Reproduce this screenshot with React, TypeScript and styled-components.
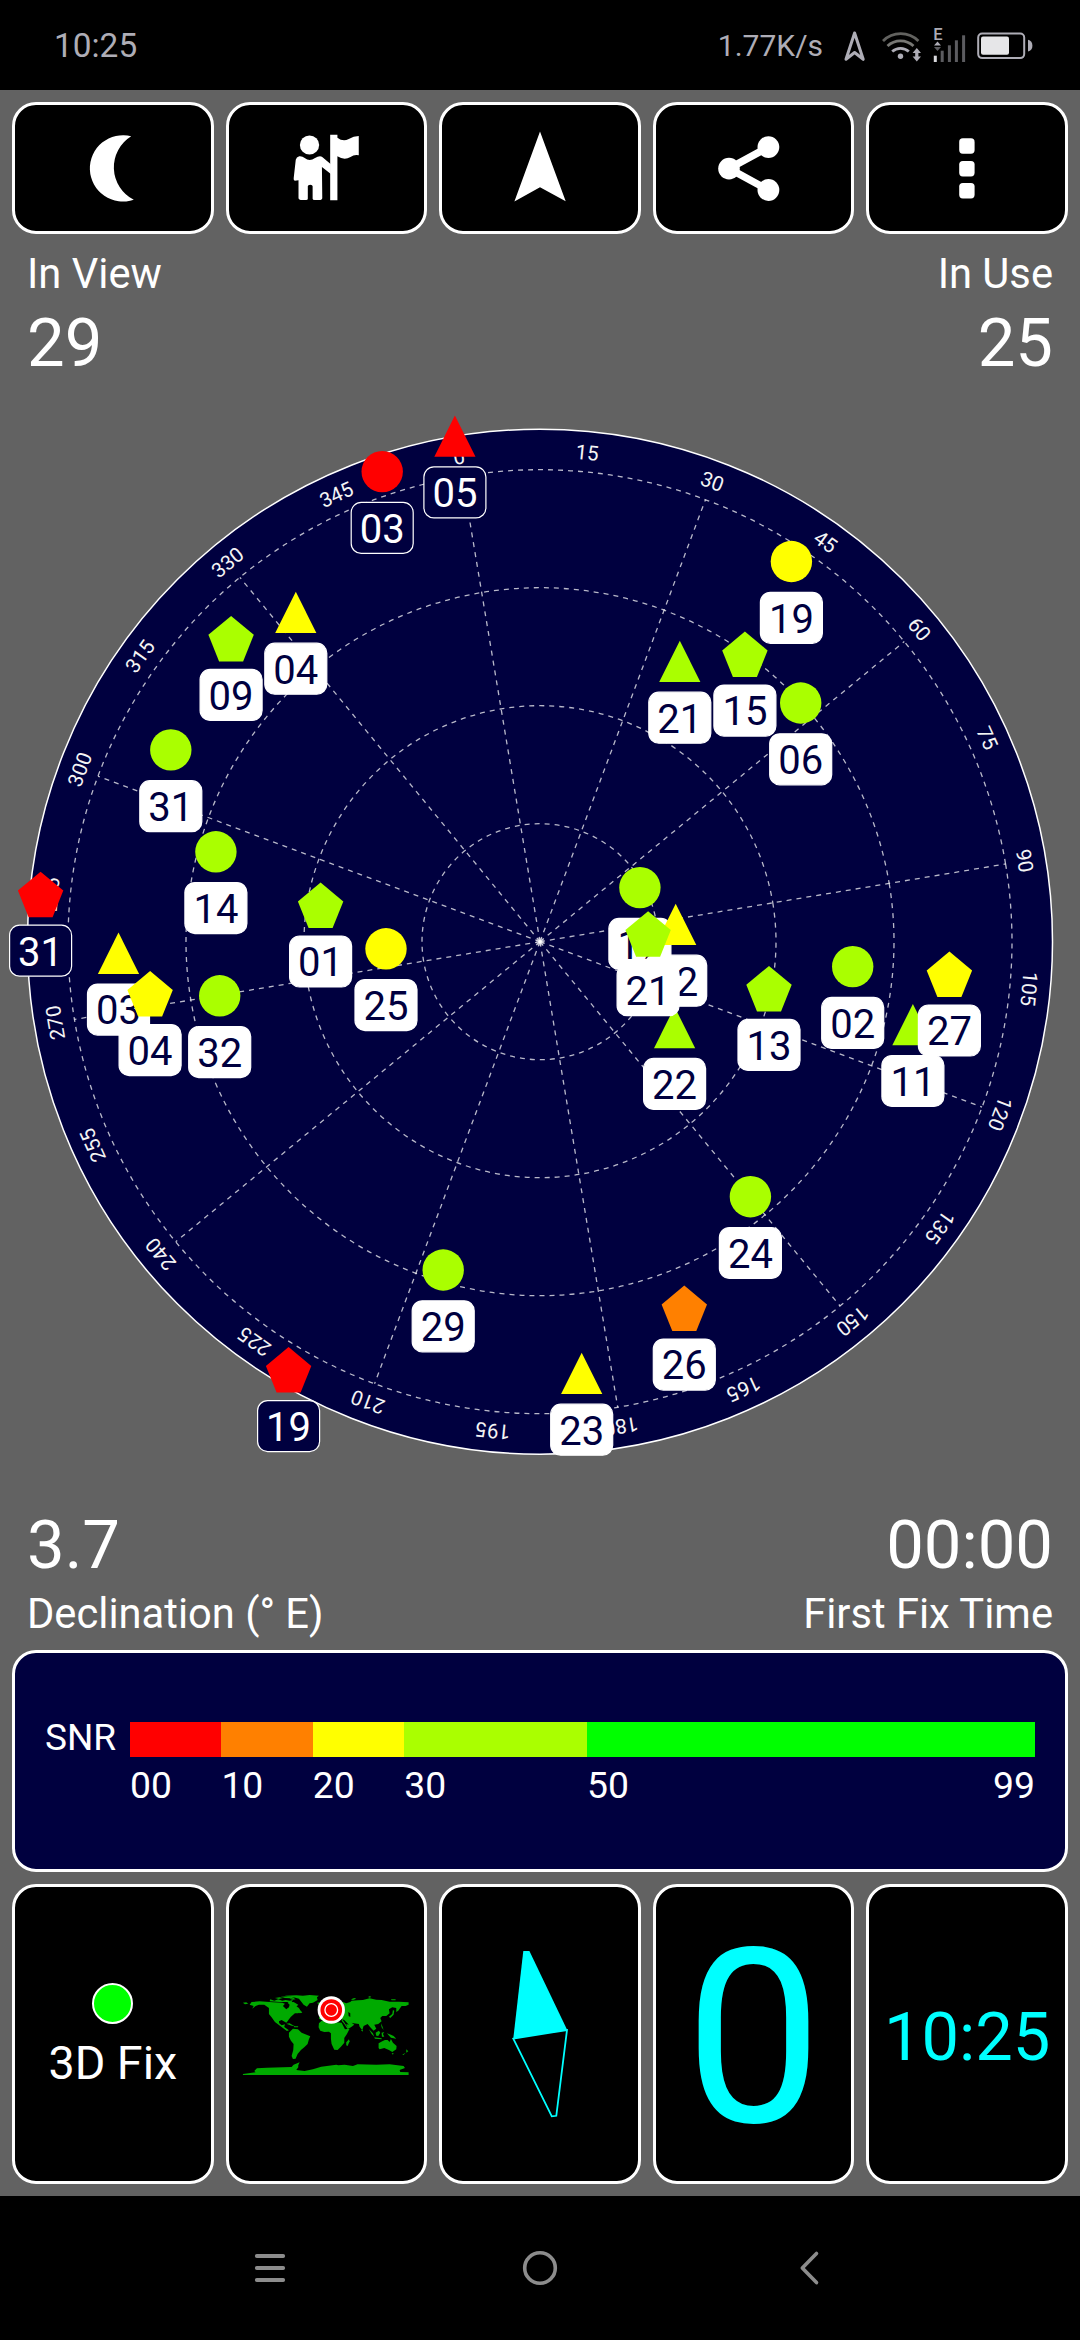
import React from "react";
import styled, { createGlobalStyle } from "styled-components";

const NAVY = "#00003f";
const GREY = "#626262";
const RED = "#ff0000";
const YELLOW = "#ffff00";
const LIME = "#aaff00";
const ORANGE = "#ff8000";
const GREEN = "#00ff00";
const CYAN = "#00ffff";
const STATUS = "#aeadb6";

const GlobalStyle = createGlobalStyle`
  *, *::before, *::after { box-sizing: border-box; }
  body { margin: 0; background: #000; }
  svg { display: block; }
`;

const Screen = styled.div`
  width: 1080px;
  height: 2340px;
  display: flex;
  flex-direction: column;
  background: #000;
  color: #fff;
  font-family: Roboto, "Liberation Sans", sans-serif;
  overflow: hidden;
`;

const StatusBar = styled.header`
  height: 90px;
  padding: 1px 47px 0 54px;
  display: flex;
  align-items: center;
  color: ${STATUS};
`;

const Clock = styled.span`
  font-size: 33.4px;
  line-height: 40px;
  margin-right: auto;
`;

const Speed = styled.span`
  font-size: 30px;
  line-height: 40px;
  margin-right: 19px;
`;

const StatusIcons = styled.div`
  display: flex;
  align-items: center;
  gap: 11px;
`;

const AppBody = styled.main`
  height: 2106px;
  padding: 12px 0;
  background: ${GREY};
  display: flex;
  flex-direction: column;
`;

const CardRow = styled.div<{ $height: number }>`
  height: ${(p) => p.$height}px;
  padding: 0 12px;
  display: grid;
  grid-template-columns: repeat(5, 1fr);
  gap: 12px;
`;

const Card = styled.button`
  margin: 0;
  padding: 0;
  min-width: 0;
  border: 3px solid #fff;
  border-radius: 24px;
  background: #000;
  color: #fff;
  font: inherit;
  display: flex;
  flex-direction: column;
  align-items: center;
  justify-content: center;
`;

const Stats = styled.section<{ $height: number; $top: number }>`
  height: ${(p) => p.$height}px;
  padding: ${(p) => p.$top}px 27px 0;
  display: flex;
  justify-content: space-between;
`;

const Stat = styled.div<{ $end?: boolean }>`
  display: flex;
  flex-direction: column;
  align-items: ${(p) => (p.$end ? "flex-end" : "flex-start")};
`;

const StatLabel = styled.span`
  font-size: 41.7px;
  line-height: 50px;
`;

const StatValue = styled.span`
  font-size: 67px;
  line-height: 88px;
`;

const SnrPanel = styled.section`
  height: 222px;
  margin: 0 12px 12px;
  padding: 69px 0 0 30px;
  border: 3px solid #fff;
  border-radius: 24px;
  background: ${NAVY};
  display: grid;
  grid-template-columns: 85px 905px;
  align-content: start;
`;

const SnrLabel = styled.span`
  font-size: 37px;
  line-height: 31px;
`;

const SnrScale = styled.div`
  display: grid;
  grid-template-columns: 10fr 10fr 10fr 20fr 49fr;
  row-gap: 5px;
`;

const SnrBand = styled.div<{ $color: string }>`
  height: 35px;
  background: ${(p) => p.$color};
`;

const SnrTick = styled.div`
  display: flex;
  justify-content: space-between;
  font-size: 37.3px;
  line-height: 46px;
`;

const FixLamp = styled.div`
  width: 41px;
  height: 41px;
  border: 2px solid #fff;
  border-radius: 50%;
  background: ${GREEN};
`;

const FixText = styled.span`
  font-size: 46.7px;
  line-height: 56px;
  margin-top: 11px;
  margin-bottom: -6px;
`;

const SpeedDigit = styled.span`
  font-size: 244px;
  line-height: 280px;
  color: ${CYAN};
  margin-top: 9px;
`;

const TimeDigits = styled.span`
  font-size: 66.8px;
  line-height: 80px;
  color: ${CYAN};
  margin-top: 5px;
`;

const NavBar = styled.nav`
  height: 144px;
  display: flex;
  align-items: center;
  justify-content: center;
  gap: 210px;
`;

const NavKey = styled.div`
  width: 60px;
  height: 60px;
`;

type Shape = "circle" | "triangle" | "pentagon";

interface Satellite {
  id: string;
  shape: Shape;
  x: number;
  y: number;
  color: string;
  unused?: boolean;
}

const satellites: Satellite[] = [
  { id: "22", shape: "triangle", x: 674.6, y: 1027.6, color: LIME },
  { id: "03", shape: "circle", x: 382.2, y: 471.6, color: RED, unused: true },
  { id: "05", shape: "triangle", x: 454.9, y: 436.1, color: RED, unused: true },
  { id: "09", shape: "pentagon", x: 231.1, y: 638.6, color: LIME },
  { id: "04", shape: "triangle", x: 295.8, y: 612.4, color: YELLOW },
  { id: "31", shape: "circle", x: 170.8, y: 749.9, color: LIME },
  { id: "14", shape: "circle", x: 215.9, y: 851.8, color: LIME },
  { id: "31", shape: "pentagon", x: 40.6, y: 894.4, color: RED, unused: true },
  { id: "01", shape: "pentagon", x: 320.6, y: 905.2, color: LIME },
  { id: "25", shape: "circle", x: 386, y: 948.8, color: YELLOW },
  { id: "03", shape: "triangle", x: 118.5, y: 953.3, color: YELLOW },
  { id: "04", shape: "pentagon", x: 150.1, y: 993.8, color: YELLOW },
  { id: "32", shape: "circle", x: 219.7, y: 995.8, color: LIME },
  { id: "29", shape: "circle", x: 443.2, y: 1270, color: LIME },
  { id: "19", shape: "pentagon", x: 288.6, y: 1369.8, color: RED, unused: true },
  { id: "19", shape: "circle", x: 791.4, y: 561.5, color: YELLOW },
  { id: "21", shape: "triangle", x: 679.8, y: 661.4, color: LIME },
  { id: "15", shape: "pentagon", x: 744.9, y: 654.3, color: LIME },
  { id: "06", shape: "circle", x: 800.7, y: 703, color: LIME },
  { id: "17", shape: "circle", x: 639.9, y: 887.6, color: LIME },
  { id: "12", shape: "triangle", x: 675.7, y: 924.4, color: YELLOW },
  { id: "21", shape: "pentagon", x: 648.1, y: 933.9, color: LIME },
  { id: "13", shape: "pentagon", x: 769, y: 988.6, color: LIME },
  { id: "02", shape: "circle", x: 852.7, y: 966.6, color: LIME },
  { id: "11", shape: "triangle", x: 912.9, y: 1024.7, color: LIME },
  { id: "27", shape: "pentagon", x: 949.4, y: 974.2, color: YELLOW },
  { id: "24", shape: "circle", x: 750.4, y: 1196.7, color: LIME },
  { id: "26", shape: "pentagon", x: 684.3, y: 1308.3, color: ORANGE },
  { id: "23", shape: "triangle", x: 581.7, y: 1373.4, color: YELLOW },
];

const CX = 540;
const CY = 941.7;
const RIM = 512.5;
const RING = 118;
const HEADING = -9.48;

function Marker({ sat }: { sat: Satellite }) {
  return (
    <g transform={`translate(${sat.x} ${sat.y})`}>
      {sat.shape === "circle" && <circle r="20.7" fill={sat.color} />}
      {sat.shape === "triangle" && <path d="M0-20.7 20.6 20.6H-20.6Z" fill={sat.color} />}
      {sat.shape === "pentagon" && (
        <path d="M0-22.7 22.7-3.8 12 22.8H-12L-22.7-3.8Z" fill={sat.color} />
      )}
      <rect
        x="-31"
        y="30.8"
        width="62"
        height="51"
        rx="10"
        fill={sat.unused ? NAVY : "#fff"}
        stroke="#fff"
        strokeWidth="1.2"
      />
      <text y="71.2" fontSize="40" textAnchor="middle" fill={sat.unused ? "#fff" : NAVY}>
        {sat.id}
      </text>
    </g>
  );
}

function SkyPlot() {
  const spokes = Array.from({ length: 12 }, (_, i) => i * 30);
  const labels = Array.from({ length: 24 }, (_, i) => i * 15);
  return (
    <svg width="1080" height="1114" viewBox="0 386 1080 1114">
      <circle cx={CX} cy={CY} r={RIM} fill={NAVY} stroke="#fff" strokeWidth="1.5" />
      <g transform={`translate(${CX} ${CY}) rotate(${HEADING})`}>
        <g fill="none" stroke="#fff" strokeOpacity="0.72" strokeWidth="1.3" strokeDasharray="5 5">
          {[1, 2, 3, 4].map((n) => (
            <circle key={n} r={RING * n} />
          ))}
          {spokes.map((a) => (
            <path key={a} d={`M0 0V${-RING * 4}`} transform={`rotate(${a})`} />
          ))}
        </g>
        <circle r="4" fill="#fff" fillOpacity="0.35" />
        <circle r="1.8" fill="#fff" fillOpacity="0.8" />
        <g fill="#f4f4f4" fontSize="20.5" textAnchor="middle">
          {labels.map((a) => (
            <text key={a} y="-484.2" transform={`rotate(${a})`}>
              {a}
            </text>
          ))}
        </g>
      </g>
      {satellites.map((s, i) => (
        <Marker key={i} sat={s} />
      ))}
    </svg>
  );
}

function MoonIcon() {
  return (
    <svg width="100" height="100" viewBox="62.8 118 100 100">
      <path d="M131 136.2A33.2 33.2 0 1 0 133.6 199.8A36.5 36.5 0 0 1 131 136.2Z" fill="#fff" />
    </svg>
  );
}

function GuideIcon() {
  return (
    <svg width="66.8" height="67.3" viewBox="850 403 194 202" preserveAspectRatio="none">
      <g fill="#fff">
        <ellipse cx="898" cy="436" rx="28" ry="28.5" />
        <path d="M868 470Q877 469 884 475Q898 487 914 475Q925 468 934 471L960 494V523L934 502L935 596Q935 600 930 601H913Q907 601 907 597V560Q907 555 900 555Q893 555 893 560V597Q893 601 888 601H872Q866 600 866 596V542L855 543Q851 541 852 536L858 480Q860 472 868 470Z" />
        <path d="M958 405H979V414Q995 427 1012 418Q1026 409 1041 409V467Q1028 464 1017 472Q999 483 979 470V602H958Z" />
      </g>
    </svg>
  );
}

function ArrowIcon() {
  return (
    <svg width="100" height="100" viewBox="490 118 100 100">
      <path d="M540 131.5 565.7 201.3 540 187.3 514.4 201.5Z" fill="#fff" />
    </svg>
  );
}

function ShareIcon() {
  return (
    <svg width="100" height="100" viewBox="703.6 118 100 100">
      <path d="M768 147 728.6 168.6 768 190" fill="none" stroke="#fff" strokeWidth="7.4" />
      <g fill="#fff">
        <circle cx="728.6" cy="168.6" r="10.8" />
        <circle cx="768" cy="147.1" r="10.9" />
        <circle cx="768" cy="190" r="10.9" />
      </g>
    </svg>
  );
}

function MoreIcon() {
  return (
    <svg width="100" height="100" viewBox="917.2 118 100 100">
      {[138.3, 161, 183].map((y) => (
        <rect key={y} x="959.4" y={y} width="15.4" height="15.4" rx="3.6" fill="#fff" />
      ))}
    </svg>
  );
}

function WorldMap() {
  return (
    <svg width="180" height="100" viewBox="19.2 42 540 300">
      <g fill="#00aa00">
        <path d="M40 98 50 97 56 101 46 103Z" />
        <path d="M60 104 66 96 90 94 130 97 158 98 166 101 160 108 170 118 178 112 180 104 174 98 180 94 190 97 196 106 208 114 214 124 206 130 196 130 184 140 178 148 174 154 170 158 156 150 148 154 149 160 156 166 166 163 164 171 178 181 172 183 152 168 136 156 126 142 118 132 118 114 104 104 88 104 78 108 68 116 72 108Z" />
        <path d="M120 94 122 88 134 92 146 88 158 92 168 90 180 92 190 90 186 96 170 96 150 96Z M136 84 150 82 160 84 148 87Z M154 80 176 79 196 81 184 85 166 84Z M180 86 192 84 198 88 188 89Z M184 98 192 96 206 104 200 110 190 104Z" />
        <path d="M165 77 200 76 220 77 240 75 268 77 262 82 264 90 250 98 240 100 232 110 222 104 214 94 208 86 192 82Z" />
        <path d="M262 98 274 97 278 101 268 104Z" />
        <path d="M170 161 180 160 190 166 196 169 186 167Z M192 168 206 169 205 172 194 172Z M206 126 214 122 218 128 210 130Z" />
        <path d="M178 188 190 176 205 178 216 188 242 199 238 208 234 222 224 232 214 240 204 252 198 266 190 267 186 258 191 240 192 222 184 212 178 200Z" />
        <path d="M268 160 276 152 296 150 310 156 336 158 346 178 360 176 352 192 344 204 344 218 334 230 324 240 314 239 306 222 304 206 304 190 298 185 284 186 272 182 267 172Z" />
        <path d="M350 217 358 208 360 214 354 228 350 226Z" />
        <path d="M268 146 274 126 286 108 304 96 340 96 350 100 362 96 366 92 384 91 400 90 420 85 440 89 456 90 480 95 508 95 537 97 537 104 528 108 516 108 506 122 500 126 500 114 488 112 478 118 480 130 470 138 458 138 452 144 456 154 446 162 434 164 440 176 432 182 422 172 414 162 402 168 398 181 390 170 388 162 372 160 366 158 374 164 364 172 354 177 344 162 336 152 338 146 322 150 304 148 288 144 276 150Z" />
        <path d="M364 88 374 84 380 86 370 90Z M416 80 422 78 424 82 418 83Z M484 88 498 88 498 91 486 91Z" />
        <path d="M478 140 488 132 490 120 494 122 492 134 482 144Z M454 160 458 168 462 180 456 172Z M394 180 400 180 399 185Z" />
        <path d="M418 178 430 190 434 200 426 192Z M434 202 456 205 456 208 436 206Z M438 188 448 182 452 188 446 198 440 197Z M456 188 464 186 460 192 464 200 457 200Z M472 190 484 194 492 198 500 206 484 203Z" />
        <path d="M447 220 458 214 466 210 474 210 480 216 484 207 490 218 501 228 500 238 488 246 478 240 464 234 450 238 447 234Z" />
        <path d="M486 250 492 249 490 254Z M530 238 536 244 530 248Z M528 248 522 255 518 254Z" />
        <path d="M40 312 78 307 74 303 82 295 112 293 186 291 192 284 210 277 206 286 206 292 200 300 225 303 250 298 275 290 320 284 326 286 345 284 370 288 384 283 440 284 480 283 522 288 526 294 510 300 512 306 537 307 537 315 40 315Z" />
      </g>
      <path d="M356 126 362 130 362 141 357 138ZM338 148 354 172 350 162 358 164 344 150Z" fill="#000" />
      <circle cx="305" cy="120" r="41" fill="#fff" />
      <circle cx="305" cy="120" r="32.5" fill={RED} />
      <circle cx="305" cy="120" r="19" fill={RED} stroke="#fff" strokeWidth="4" />
    </svg>
  );
}

function CompassNeedle() {
  return (
    <svg width="100" height="190" viewBox="490 1939 100 190">
      <path d="M523.3 1951H529.4L567.2 2030 513.3 2038.6Z" fill={CYAN} />
      <path
        d="M513.3 2038.6 551.8 2116.3 556.3 2115.8 567 2030Z"
        fill="none"
        stroke={CYAN}
        strokeWidth="1.8"
      />
    </svg>
  );
}

function LocationStatus() {
  return (
    <svg width="27" height="34" viewBox="842 28 27 34">
      <path
        d="M854.6 32 846 58.3 854.6 51.5 863.2 58.3Z"
        fill="none"
        stroke={STATUS}
        strokeWidth="3"
        strokeLinejoin="round"
      />
    </svg>
  );
}

function WifiStatus() {
  return (
    <svg width="42" height="34" viewBox="880 29 42 34">
      <g fill="none" strokeWidth="2.8">
        <path d="M883 41A25 25 0 0 1 918.4 41" stroke="#62625f" />
        <path d="M887.5 46A19 19 0 0 1 913.5 46" stroke="#777774" />
        <path d="M892.2 51.5A12.5 12.5 0 0 1 908.8 51.5" stroke={STATUS} />
      </g>
      <circle cx="900.5" cy="56.3" r="2.7" fill={STATUS} />
      <path d="M916.8 48 921 53H918.4V56.5H921L916.8 61.6 912.6 56.5H915.2V53H912.6Z" fill={STATUS} />
    </svg>
  );
}

function SignalStatus() {
  const bars = [
    [935.3, 54.7],
    [942.2, 49.7],
    [949.4, 44.3],
    [956.4, 39.3],
    [963.6, 34.3],
  ];
  return (
    <svg width="33" height="50" viewBox="933 20 33 50">
      <text x="933.2" y="39" fontSize="16.5" fontWeight="500" fill={STATUS}>
        E
      </text>
      <path d="M937.5 40.5 941 44.5H934Z" fill={STATUS} />
      <path d="M934 46H941L937.5 50Z" fill="#5c5c60" />
      {bars.map(([x, y], i) => (
        <rect
          key={x}
          x={x - 1.5}
          y={y}
          width="3"
          height={61 - y}
          fill={i === 0 ? "#d8d8dc" : "#5c5c60"}
        />
      ))}
    </svg>
  );
}

function BatteryStatus() {
  return (
    <svg width="56" height="30" viewBox="977 30.5 56 30">
      <rect x="978.2" y="33" width="46" height="24.6" rx="4" fill="none" stroke={STATUS} strokeWidth="2" />
      <rect x="981" y="36" width="28" height="18.2" rx="2" fill="#e6e6e8" />
      <path d="M1028 39.3Q1032.4 40.5 1032.4 45.2T1028 51Z" fill={STATUS} />
    </svg>
  );
}

export default function App() {
  return (
    <Screen>
      <GlobalStyle />
      <StatusBar>
        <Clock>10:25</Clock>
        <Speed>1.77K/s</Speed>
        <StatusIcons>
          <LocationStatus />
          <WifiStatus />
          <SignalStatus />
          <BatteryStatus />
        </StatusIcons>
      </StatusBar>
      <AppBody>
        <CardRow $height={132}>
          <Card><MoonIcon /></Card>
          <Card><GuideIcon /></Card>
          <Card><ArrowIcon /></Card>
          <Card><ShareIcon /></Card>
          <Card><MoreIcon /></Card>
        </CardRow>
        <Stats $height={152} $top={15}>
          <Stat>
            <StatLabel>In View</StatLabel>
            <StatValue>29</StatValue>
          </Stat>
          <Stat $end>
            <StatLabel>In Use</StatLabel>
            <StatValue>25</StatValue>
          </Stat>
        </Stats>
        <SkyPlot />
        <Stats $height={150} $top={1}>
          <Stat>
            <StatValue>3.7</StatValue>
            <StatLabel>Declination (° E)</StatLabel>
          </Stat>
          <Stat $end>
            <StatValue>00:00</StatValue>
            <StatLabel>First Fix Time</StatLabel>
          </Stat>
        </Stats>
        <SnrPanel>
          <SnrLabel>SNR</SnrLabel>
          <SnrScale>
            <SnrBand $color={RED} />
            <SnrBand $color={ORANGE} />
            <SnrBand $color={YELLOW} />
            <SnrBand $color={LIME} />
            <SnrBand $color={GREEN} />
            <SnrTick>00</SnrTick>
            <SnrTick>10</SnrTick>
            <SnrTick>20</SnrTick>
            <SnrTick>30</SnrTick>
            <SnrTick>
              <span>50</span>
              <span>99</span>
            </SnrTick>
          </SnrScale>
        </SnrPanel>
        <CardRow $height={300}>
          <Card>
            <FixLamp />
            <FixText>3D Fix</FixText>
          </Card>
          <Card><WorldMap /></Card>
          <Card><CompassNeedle /></Card>
          <Card><SpeedDigit>0</SpeedDigit></Card>
          <Card><TimeDigits>10:25</TimeDigits></Card>
        </CardRow>
      </AppBody>
      <NavBar>
        <NavKey>
          <svg width="60" height="60" viewBox="240 2238 60 60">
            <path
              d="M256.8 2256H283.2M256.8 2268H283.2M256.8 2280H283.2"
              stroke="#8c8c8c"
              strokeWidth="3.8"
              strokeLinecap="round"
            />
          </svg>
        </NavKey>
        <NavKey>
          <svg width="60" height="60" viewBox="510 2238 60 60">
            <circle cx="540" cy="2268" r="15.3" fill="none" stroke="#8c8c8c" strokeWidth="3.6" />
          </svg>
        </NavKey>
        <NavKey>
          <svg width="60" height="60" viewBox="780 2238 60 60">
            <path
              d="M816.5 2253.5 802.3 2268 816.5 2282.6"
              fill="none"
              stroke="#8c8c8c"
              strokeWidth="3.6"
              strokeLinecap="round"
              strokeLinejoin="round"
            />
          </svg>
        </NavKey>
      </NavBar>
    </Screen>
  );
}
